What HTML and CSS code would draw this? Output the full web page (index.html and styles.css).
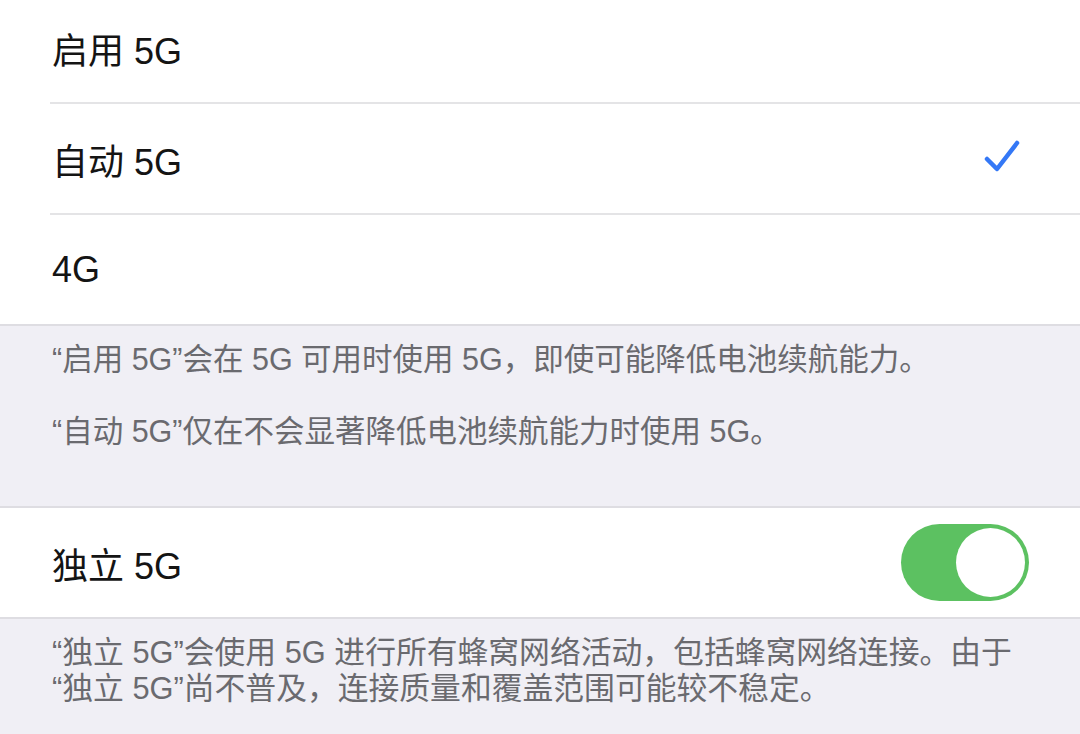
FILE: index.html
```html
<!DOCTYPE html>
<html lang="zh-CN">
<head>
<meta charset="utf-8">
<link rel="stylesheet" href="styles.css">
</head>
<body>
<div class="page">
  <div class="group first">
    <div class="row"><span class="label">启用 5G</span></div>
    <div class="row"><span class="label">自动 5G</span>
      <svg class="check" width="36" height="36" viewBox="0 0 36 36"><path d="M3 20 L13 30 L33 4" fill="none" stroke="#3478f6" stroke-width="4.5" stroke-linecap="round" stroke-linejoin="round"/></svg>
    </div>
    <div class="row"><span class="label">4G</span></div>
  </div>
  <div class="note">
    <p>“启用 5G”会在 5G 可用时使用 5G，即使可能降低电池续航能力。</p>
    <p>“自动 5G”仅在不会显著降低电池续航能力时使用 5G。</p>
  </div>
  <div class="group">
    <div class="row"><span class="label">独立 5G</span>
      <div class="toggle"><div class="knob"></div></div>
    </div>
  </div>
  <div class="footer">
    <p>“独立 5G”会使用 5G 进行所有蜂窝网络活动，包括蜂窝网络连接。由于<br>“独立 5G”尚不普及，连接质量和覆盖范围可能较不稳定。</p>
  </div>
</div>
</body>
</html>
```

FILE: styles.css
```css
* { box-sizing: border-box; }
html, body {
  margin: 0;
  padding: 0;
  background: #f0eff5;
  overflow: hidden;
}
body {
  font-family: "Liberation Sans", "Noto Sans CJK SC", sans-serif;
  width: 1080px;
  height: 734px;
}
.page {
  display: flex;
  flex-direction: column;
}
.group {
  background: #ffffff;
  border-top: 2px solid #dedde2;
  border-bottom: 2px solid #dedde2;
  padding-left: 50px;
}
.group.first {
  margin-top: -9px;
}
.row {
  height: 111px;
  display: flex;
  align-items: center;
  justify-content: space-between;
  padding-right: 52px;
  border-bottom: 2px solid #e4e4e6;
}
.row:last-child {
  border-bottom: none;
  height: 109px;
}
.label {
  font-size: 36px;
  color: #141414;
  padding-left: 2px;
}
.check {
  margin-right: 8px;
  margin-top: -4px;
}
.note {
  padding: 15px 20px 57px 52px;
  color: #6a6a6f;
  font-size: 30.5px;
  line-height: 36px;
}
.note p {
  margin: 0 0 36px 0;
}
.note p:last-child { margin-bottom: 0; }
.toggle {
  width: 128px;
  height: 77px;
  border-radius: 39px;
  background: #5cc161;
  display: flex;
  align-items: center;
  justify-content: flex-end;
  padding-right: 4px;
  margin-right: -1px;
}
.knob {
  width: 69px;
  height: 69px;
  border-radius: 50%;
  background: #ffffff;
}
.footer {
  padding: 16px 20px 0 52px;
  color: #6a6a6f;
  font-size: 30.8px;
  line-height: 36px;
}
.footer p { margin: 0; }
```
